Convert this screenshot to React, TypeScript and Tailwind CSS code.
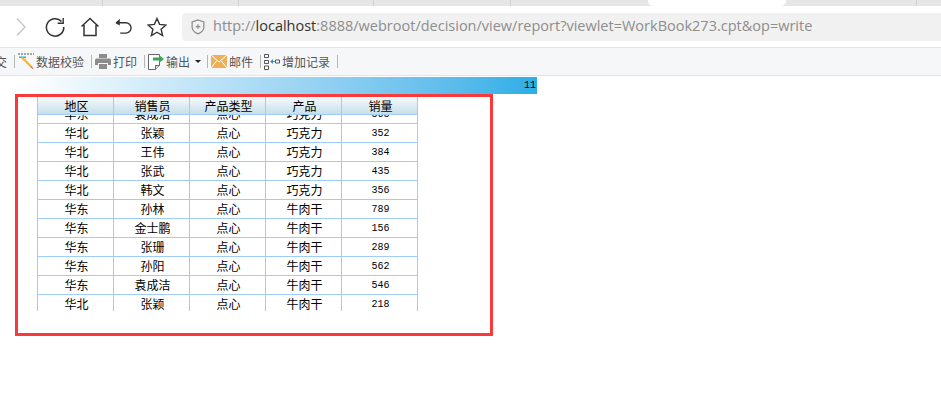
const sans = "font-['Noto_Sans_CJK_SC','Noto_Sans',sans-serif]";

const rows = [
  ["华东", "袁成洁", "点心", "巧克力", "565"],
  ["华北", "张颖", "点心", "巧克力", "352"],
  ["华北", "王伟", "点心", "巧克力", "384"],
  ["华北", "张武", "点心", "巧克力", "435"],
  ["华北", "韩文", "点心", "巧克力", "356"],
  ["华东", "孙林", "点心", "牛肉干", "789"],
  ["华东", "金士鹏", "点心", "牛肉干", "156"],
  ["华东", "张珊", "点心", "牛肉干", "289"],
  ["华东", "孙阳", "点心", "牛肉干", "562"],
  ["华东", "袁成洁", "点心", "牛肉干", "546"],
  ["华北", "张颖", "点心", "牛肉干", "218"],
];

const headers = ["地区", "销售员", "产品类型", "产品", "销量"];

function Sep({ className = "ml-[7px]" }: { className?: string }) {
  return <span className={`h-[13px] w-px shrink-0 bg-[#b5b5b5] ${className}`} />;
}

function ToolLabel({ children }: { children: string }) {
  return <span className="ml-[2px] text-[12px] leading-none text-[#555]">{children}</span>;
}

export default function App() {
  return (
    <div className={`relative h-[415px] w-[941px] overflow-hidden bg-white ${sans}`}>
      {/* tab strip */}
      <div className="flex h-[6px] bg-[#e6e6e6]">
        <div className="w-[103px] border-r border-[#cfcfcf]" />
        <div className="w-[136px] border-r border-[#cfcfcf]" />
        <div className="w-[135px] border-r border-[#cfcfcf]" />
        <div className="w-[137px] border-r border-[#cfcfcf]" />
        <div className="w-[137px]" />
        <div className="w-[138px] rounded-b-[5px] bg-white" />
        <div className="w-[131px] border-r border-[#cfcfcf]" />
      </div>

      {/* address row */}
      <div className="flex h-[42px] items-center border-b border-[#e4e4e4] bg-white">
        <svg width="12" height="20" viewBox="0 0 12 20" className="ml-[15px]" fill="none" stroke="#c4c4c4" strokeWidth="1.3">
          <path d="M2 1.500 10 10 2 18.500" />
        </svg>
        <svg width="20" height="20" viewBox="0 0 20 20" className="ml-[18px]" fill="none" stroke="#333" strokeWidth="1.5">
          <path d="M16.500 4.500A8.700 8.700 0 1 0 18.800 10" />
          <path d="M12.600 6.200h5.600V1" fill="none" strokeWidth="1.4" />
        </svg>
        <svg width="20" height="20" viewBox="0 0 20 20" className="ml-[15px]" fill="none" stroke="#333" strokeWidth="1.5">
          <path d="M1.500 9.500 10 1.500l8.500 8M4 8v10.500h12V8" />
        </svg>
        <svg width="17" height="18" viewBox="0 0 18 18" className="ml-[15px]" fill="none" stroke="#333" strokeWidth="1.5">
          <path d="M1 4.500h10.500a5 5 0 0 1 0 11H5.500" />
          <path d="M5 1 1 4.500 5 7" fill="#333" strokeWidth="1" />
        </svg>
        <svg width="20" height="20" viewBox="0 0 20 20" className="ml-[15px]" fill="none" stroke="#333" strokeWidth="1.4">
          <path d="M10 1.500 12.600 7.400l6.400.6-4.900 4.200 1.500 6.300L10 15.200l-5.600 3.300 1.500-6.300L1 8l6.400-.6z" />
        </svg>
        <div className="ml-[15px] flex h-[28px] flex-1 items-center rounded-l-[4px] bg-[#f1f1f1] pl-[9px]">
          <svg width="14" height="16" viewBox="0 0 15 17" fill="none" stroke="#8a8a8a" strokeWidth="1.3">
            <path d="M7.500 1 13.800 3v5.500c0 3.600-2.800 6-6.300 7.400C4 14.500 1.200 12.100 1.200 8.500V3z" />
            <path d="M7.500 5.500v5M5 8h5" />
          </svg>
          <span className="ml-[8px] whitespace-nowrap font-['Open_Sans',sans-serif] text-[14.5px] leading-none text-[#8d8d8d]">
            http://<span className="text-[#333]">localhost</span>:8888/webroot/decision/view/report?viewlet=WorkBook273.cpt&amp;op=write
          </span>
        </div>
      </div>

      {/* report toolbar */}
      <div className="flex h-[28px] items-center overflow-hidden border-b border-[#e4e4e4] bg-[#f6f7f9]">
        <span className="ml-[-5px] w-[12px] text-[12px] leading-none text-[#555]">交</span>
        <Sep />
        <svg width="16" height="18" viewBox="0 0 16 18" className="ml-[3px]">
          <path d="M0 1h16" stroke="#555" strokeWidth="1" strokeDasharray="2 1" />
          <path d="M1 3.500h7v1.500H1z" fill="#3aa5e0" />
          <path d="M3 5 12 14l2-1L5 4z" fill="#f2b632" />
          <path d="M12 14l2-1 1.500 3.500z" fill="#e8624a" />
        </svg>
        <ToolLabel>数据校验</ToolLabel>
        <Sep />
        <svg width="16" height="15" viewBox="0 0 16 15" className="ml-[3px]" fill="#8c8c8c">
          <path d="M4 0h8v4H4z" />
          <path d="M1.500 4.500h13A1.500 1.500 0 0 1 16 6v5h-3V9H3v2H0V6a1.500 1.500 0 0 1 1.500-1.500z" />
          <path d="M4 10h8v5H4z" />
        </svg>
        <ToolLabel>打印</ToolLabel>
        <Sep />
        <svg width="16" height="18" viewBox="0 0 16 18" className="ml-[3px]">
          <path d="M.5 1.500h11v11l-4 4h-7z" fill="#fff" stroke="#666" />
          <path d="M7.500 16.500v-4h4" fill="#ddd" stroke="#666" />
          <path d="M5 4.500h6V2l5 4-5 4V7.500H5z" fill="#3aa655" />
        </svg>
        <ToolLabel>输出</ToolLabel>
        <span className="ml-[5px] h-0 w-0 border-x-[3px] border-t-[3px] border-x-transparent border-t-[#222]" />
        <Sep className="ml-[6px]" />
        <svg width="16" height="13" viewBox="0 0 16 13" className="ml-[3px]">
          <path d="M0 0h16v13H0z" fill="#edaf58" />
          <path d="M0 0l8 7 8-7M0 13l6-7.500M16 13l-6-7.500" fill="none" stroke="#fff" strokeWidth="1" />
        </svg>
        <ToolLabel>邮件</ToolLabel>
        <Sep />
        <svg width="16" height="16" viewBox="0 0 16 16" className="ml-[3px]">
          <path d="M.5 .5h4v3h-4zM.5 6.500h4v3h-4zM.5 12h4v3.500h-4zM11.500 6h4v3h-4z" fill="#fff" stroke="#555" />
          <path d="M6 7.500 9 5v5z" fill="#3a8fd8" />
          <path d="M8 7h3.500v1H8z" fill="#3a8fd8" />
        </svg>
        <ToolLabel>增加记录</ToolLabel>
        <Sep />
      </div>

      {/* progress bar */}
      <div className="mt-px flex h-[17px] w-[537px] items-center justify-end bg-gradient-to-r from-white from-[4%] to-[#29aee6] pr-[1px]">
        <span className="font-['Liberation_Mono',monospace] text-[10px] leading-none text-black">11</span>
      </div>

      {/* report table */}
      <div className="ml-[37px] w-[381px]">
        <div className="flex h-[21px] border-b border-l border-[#a0ccf8] bg-gradient-to-b from-white to-[#c6dfea]">
          {headers.map((h) => (
            <div key={h} className="flex w-[76px] items-center justify-center border-r border-[#a0ccf8] pl-[2px] pt-[3px] text-[12px] leading-none text-black">
              {h}
            </div>
          ))}
        </div>
        <div className="h-[196px] overflow-hidden">
          <div className="mt-[-10px]">
            {rows.map((r, i) => (
              <div key={i} className="flex h-[19px] border-b border-l border-[#a0ccf8]">
                {r.map((c, j) => (
                  <div
                    key={j}
                    className={`flex w-[76px] items-center justify-center border-r border-[#a0ccf8] pl-[2px] leading-none text-black ${
                      j === 4 ? "pt-px font-['Liberation_Mono',monospace] text-[10px]" : "text-[12px]"
                    }`}
                  >
                    {c}
                  </div>
                ))}
              </div>
            ))}
          </div>
        </div>
      </div>

      {/* red annotation box drawn over the screenshot */}
      <div className="absolute left-[15px] top-[94px] h-[242px] w-[478px] border-[3px] border-[#f93a3a]" />
    </div>
  );
}
